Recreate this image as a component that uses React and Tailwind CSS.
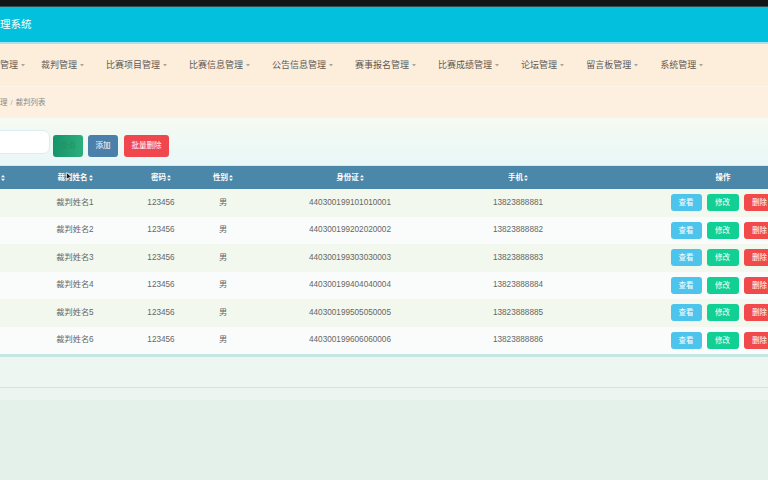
import React from "react";

const FONT = { fontFamily: '"Liberation Sans","Noto Sans CJK SC",sans-serif' };

const navItems = [
  "裁判管理",
  "比赛项目管理",
  "比赛信息管理",
  "公告信息管理",
  "赛事报名管理",
  "比赛成绩管理",
  "论坛管理",
  "留言板管理",
  "系统管理",
];

const rows = [1, 2, 3, 4, 5, 6].map((i) => ({
  name: `裁判姓名${i}`,
  pwd: "123456",
  sex: "男",
  id: `440300199${i}0${i}0${i}000${i}`,
  phone: `1382388888${i}`,
}));

function Sort() {
  return (
    <svg width="4" height="6" viewBox="0 0 4 6" className="ml-[1px] shrink-0">
      <path d="M2 0 L4 2.3 L0 2.3 Z M2 6 L4 3.7 L0 3.7 Z" fill="#ffffff" />
    </svg>
  );
}

function Caret() {
  return (
    <svg width="4" height="3" viewBox="0 0 4 3" className="ml-[3px]">
      <path d="M0 0 L4 0 L2 2.5 Z" fill="#a9a49e" />
    </svg>
  );
}

const cols = ["w-[30px]", "w-[90px]", "w-[82px]", "w-[42px]", "w-[212px]", "w-[124px]", "w-[286px]"];

export default function App() {
  return (
    <div style={FONT} className="w-[768px] h-[480px] overflow-hidden bg-[#e4f1ea] relative">
      <div className="h-[6px] bg-[#131415]" />
      <div className="h-[1px] bg-[#2e4d55]" />
      <div className="h-[35px] bg-[#03c1dc] flex items-center">
        <span className="text-white text-[10.5px] leading-none">理系统</span>
      </div>
      <div className="h-[2px] bg-[#a4e3ef]" />
      <div className="h-[42px] bg-[#fdeedc] flex items-center">
        <div className="flex items-center text-[9px] leading-none text-[#5e5a55] pr-[5px]">
          <span>管理</span>
          <Caret />
        </div>
        <div className="flex items-center">
          {navItems.map((t) => (
            <div key={t} className="flex items-center px-[11px] text-[9px] leading-none text-[#5e5a55]">
              <span>{t}</span>
              <Caret />
            </div>
          ))}
        </div>
      </div>
      <div className="h-[1px] bg-[#fdf4ea]" />
      <div className="h-[31px] bg-[#fdf0e1] flex items-center text-[7.5px] text-[#8d8883] leading-none">
        <span>理</span>
        <span className="mx-[3px] text-[#b0aaa4]">/</span>
        <span>裁判列表</span>
      </div>
      <div className="h-[47px] bg-gradient-to-b from-[#f6faf1] to-[#e9f7f7] flex items-start pt-[12px]">
        <div className="-ml-[20px] w-[70px] h-[24px] rounded-[7px] bg-white border border-[#d8eef1]" />
        <button className="ml-[3px] mt-[5px] w-[30px] h-[22px] rounded-[3px] bg-gradient-to-r from-[#15936a] to-[#2cae7c] text-[7.5px] text-[#23935f]">
          查询
        </button>
        <button className="ml-[5px] mt-[5px] w-[30px] h-[22px] rounded-[3px] bg-[#4b80aa] text-[7.5px] text-white">
          添加
        </button>
        <button className="ml-[6px] mt-[5px] w-[45px] h-[22px] rounded-[3px] bg-[#f0474f] text-[7.5px] text-white">
          批量删除
        </button>
      </div>
      <div className="h-[1px] bg-[#cfedf1]" />
      <div className="relative h-[23px] bg-[#4b87a9] flex items-center text-white font-bold text-[7.5px] leading-none">
        <div className={`${cols[0]} shrink-0 flex items-center`}>
          <Sort />
        </div>
        {["裁判姓名", "密码", "性别", "身份证", "手机"].map((h, i) => (
          <div key={h} className={`${cols[i + 1]} shrink-0 flex items-center justify-center`}>
            <span>{h}</span>
            <Sort />
          </div>
        ))}
        <div className={`${cols[6]} shrink-0 flex items-center justify-center`}>操作</div>
        <svg width="7" height="9" viewBox="0 0 7 9" className="absolute left-[66px] top-[6px]">
          <path d="M0.5 0.5 L0.5 7.5 L2.3 5.8 L3.6 8.5 L4.6 8 L3.4 5.4 L6 5.4 Z" fill="#1b1b1b" stroke="#ffffff" strokeWidth="0.6" />
        </svg>
      </div>
      {rows.map((r, i) => (
        <div
          key={i}
          className={`h-[27.5px] flex items-center text-[8.2px] text-[#666666] leading-none ${
            i % 2 === 0 ? "bg-[#f2f8ee]" : "bg-[#fafcfb]"
          }`}
        >
          <div className={`${cols[0]} shrink-0`} />
          <div className={`${cols[1]} shrink-0 text-center`}>{r.name}</div>
          <div className={`${cols[2]} shrink-0 text-center`}>{r.pwd}</div>
          <div className={`${cols[3]} shrink-0 text-center`}>{r.sex}</div>
          <div className={`${cols[4]} shrink-0 text-center`}>{r.id}</div>
          <div className={`${cols[5]} shrink-0 text-center`}>{r.phone}</div>
          <div className={`${cols[6]} shrink-0 flex justify-center gap-[5px]`}>
            <button className="w-[31px] h-[17px] rounded-[3px] bg-[#4dc4ec] text-white text-[7.5px]">查看</button>
            <button className="w-[32px] h-[17px] rounded-[3px] bg-[#12cf94] text-white text-[7.5px]">修改</button>
            <button className="w-[32px] h-[17px] rounded-[3px] bg-[#f04a4a] text-white text-[7.5px]">删除</button>
          </div>
        </div>
      ))}
      <div className="h-[3px] bg-[#c6e6e3]" />
      <div className="h-[30px] bg-[#eef6f2]" />
      <div className="h-[1px] bg-[#d4e4e4]" />
      <div className="h-[12px] bg-[#edf5f0]" />
    </div>
  );
}
